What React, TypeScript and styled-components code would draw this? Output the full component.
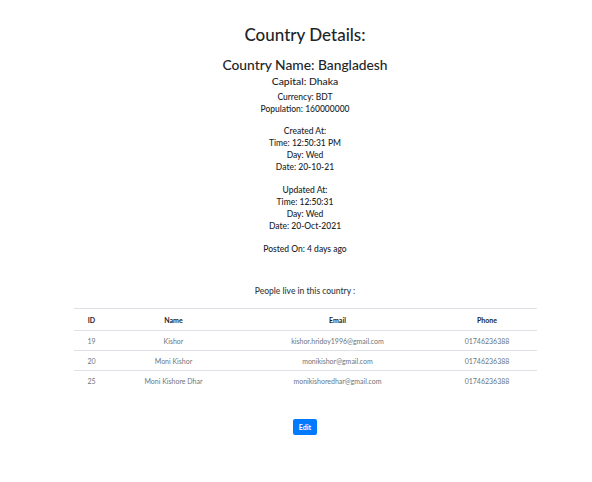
import React from 'react'
import styled, {createGlobalStyle} from 'styled-components'

const GlobalStyle = createGlobalStyle`
  body {
    margin: 0;
    background: #fff;
    font-family: Lato, "Open Sans", sans-serif;
    color: #212529;
  }
`

const Page = styled.div`
  width: 592px;
  box-sizing: border-box;
  display: flex;
  flex-direction: column;
  align-items: center;
  padding: 22px 0 0 18px;
  text-align: center;
`
const Title = styled.h1`
  margin: 0;
  font-size: 17px;
  font-weight: 500;
  line-height: 26px;
`
const CountryName = styled.h2`
  margin: 7px 0 0;
  font-size: 13.8px;
  font-weight: 500;
  line-height: 20px;
`
const Capital = styled.h3`
  margin: 0;
  font-size: 10.4px;
  font-weight: 500;
  line-height: 12px;
`
const Block = styled.div<{$top?: number}>`
  margin-top: ${p => p.$top ?? 0}px;
  display: flex;
  flex-direction: column;
`
const Line = styled.div`
  font-size: 8.5px;
  font-weight: 500;
  line-height: 12px;
`
const SubHeading = styled.div`
  margin-top: 30px;
  font-size: 8.5px;
  font-weight: 500;
  line-height: 12px;
  color: #343a40;
`
const Table = styled.table`
  margin-top: 11px;
  width: 463px;
  border-collapse: collapse;
  font-size: 7px;
`
const Th = styled.th<{$w: number}>`
  width: ${p => p.$w}px;
  height: 21px;
  padding: 0;
  font-weight: 700;
  color: #212529;
  border-top: 1px solid #dee2e6;
  border-bottom: 1px solid #dee2e6;
`
const Td = styled.td`
  height: 19px;
  padding: 0;
  color: #6c757d;
  border-top: 1px solid #dee2e6;
`
const Row = styled.tr`
  &:first-child td { border-top: none; }
`
const EditButton = styled.button`
  margin-top: 29px;
  width: 24px;
  height: 16px;
  padding: 0;
  border: none;
  border-radius: 2px;
  background: #007bff;
  color: #fff;
  font-family: inherit;
  font-size: 7px;
  font-weight: 700;
`

const people = [
  {id: 19, name: 'Kishor', email: 'kishor.hridoy1996@gmail.com', phone: '01746236388'},
  {id: 20, name: 'Moni Kishor', email: 'monikishor@gmail.com', phone: '01746236388'},
  {id: 25, name: 'Moni Kishore Dhar', email: 'monikishoredhar@gmail.com', phone: '01746236388'},
]

const App: React.FC = () => {
  return (
    <Page>
      <GlobalStyle />
      <Title>Country Details:</Title>
      <CountryName>Country Name: Bangladesh</CountryName>
      <Capital>Capital: Dhaka</Capital>
      <Block $top={4}>
        <Line>Currency: BDT</Line>
        <Line>Population: 160000000</Line>
      </Block>
      <Block $top={10}>
        <Line>Created At:</Line>
        <Line>Time: 12:50:31 PM</Line>
        <Line>Day: Wed</Line>
        <Line>Date: 20-10-21</Line>
      </Block>
      <Block $top={11}>
        <Line>Updated At:</Line>
        <Line>Time: 12:50:31</Line>
        <Line>Day: Wed</Line>
        <Line>Date: 20-Oct-2021</Line>
      </Block>
      <Block $top={11}>
        <Line>Posted On: 4 days ago</Line>
      </Block>
      <SubHeading>People live in this country :</SubHeading>
      <Table>
        <thead>
          <tr>
            <Th $w={36}>ID</Th>
            <Th $w={128}>Name</Th>
            <Th $w={200}>Email</Th>
            <Th $w={99}>Phone</Th>
          </tr>
        </thead>
        <tbody>
          {people.map(p => (
            <Row key={p.id}>
              <Td>{p.id}</Td>
              <Td>{p.name}</Td>
              <Td>{p.email}</Td>
              <Td>{p.phone}</Td>
            </Row>
          ))}
        </tbody>
      </Table>
      <EditButton>Edit</EditButton>
    </Page>
  )
}

export default App
